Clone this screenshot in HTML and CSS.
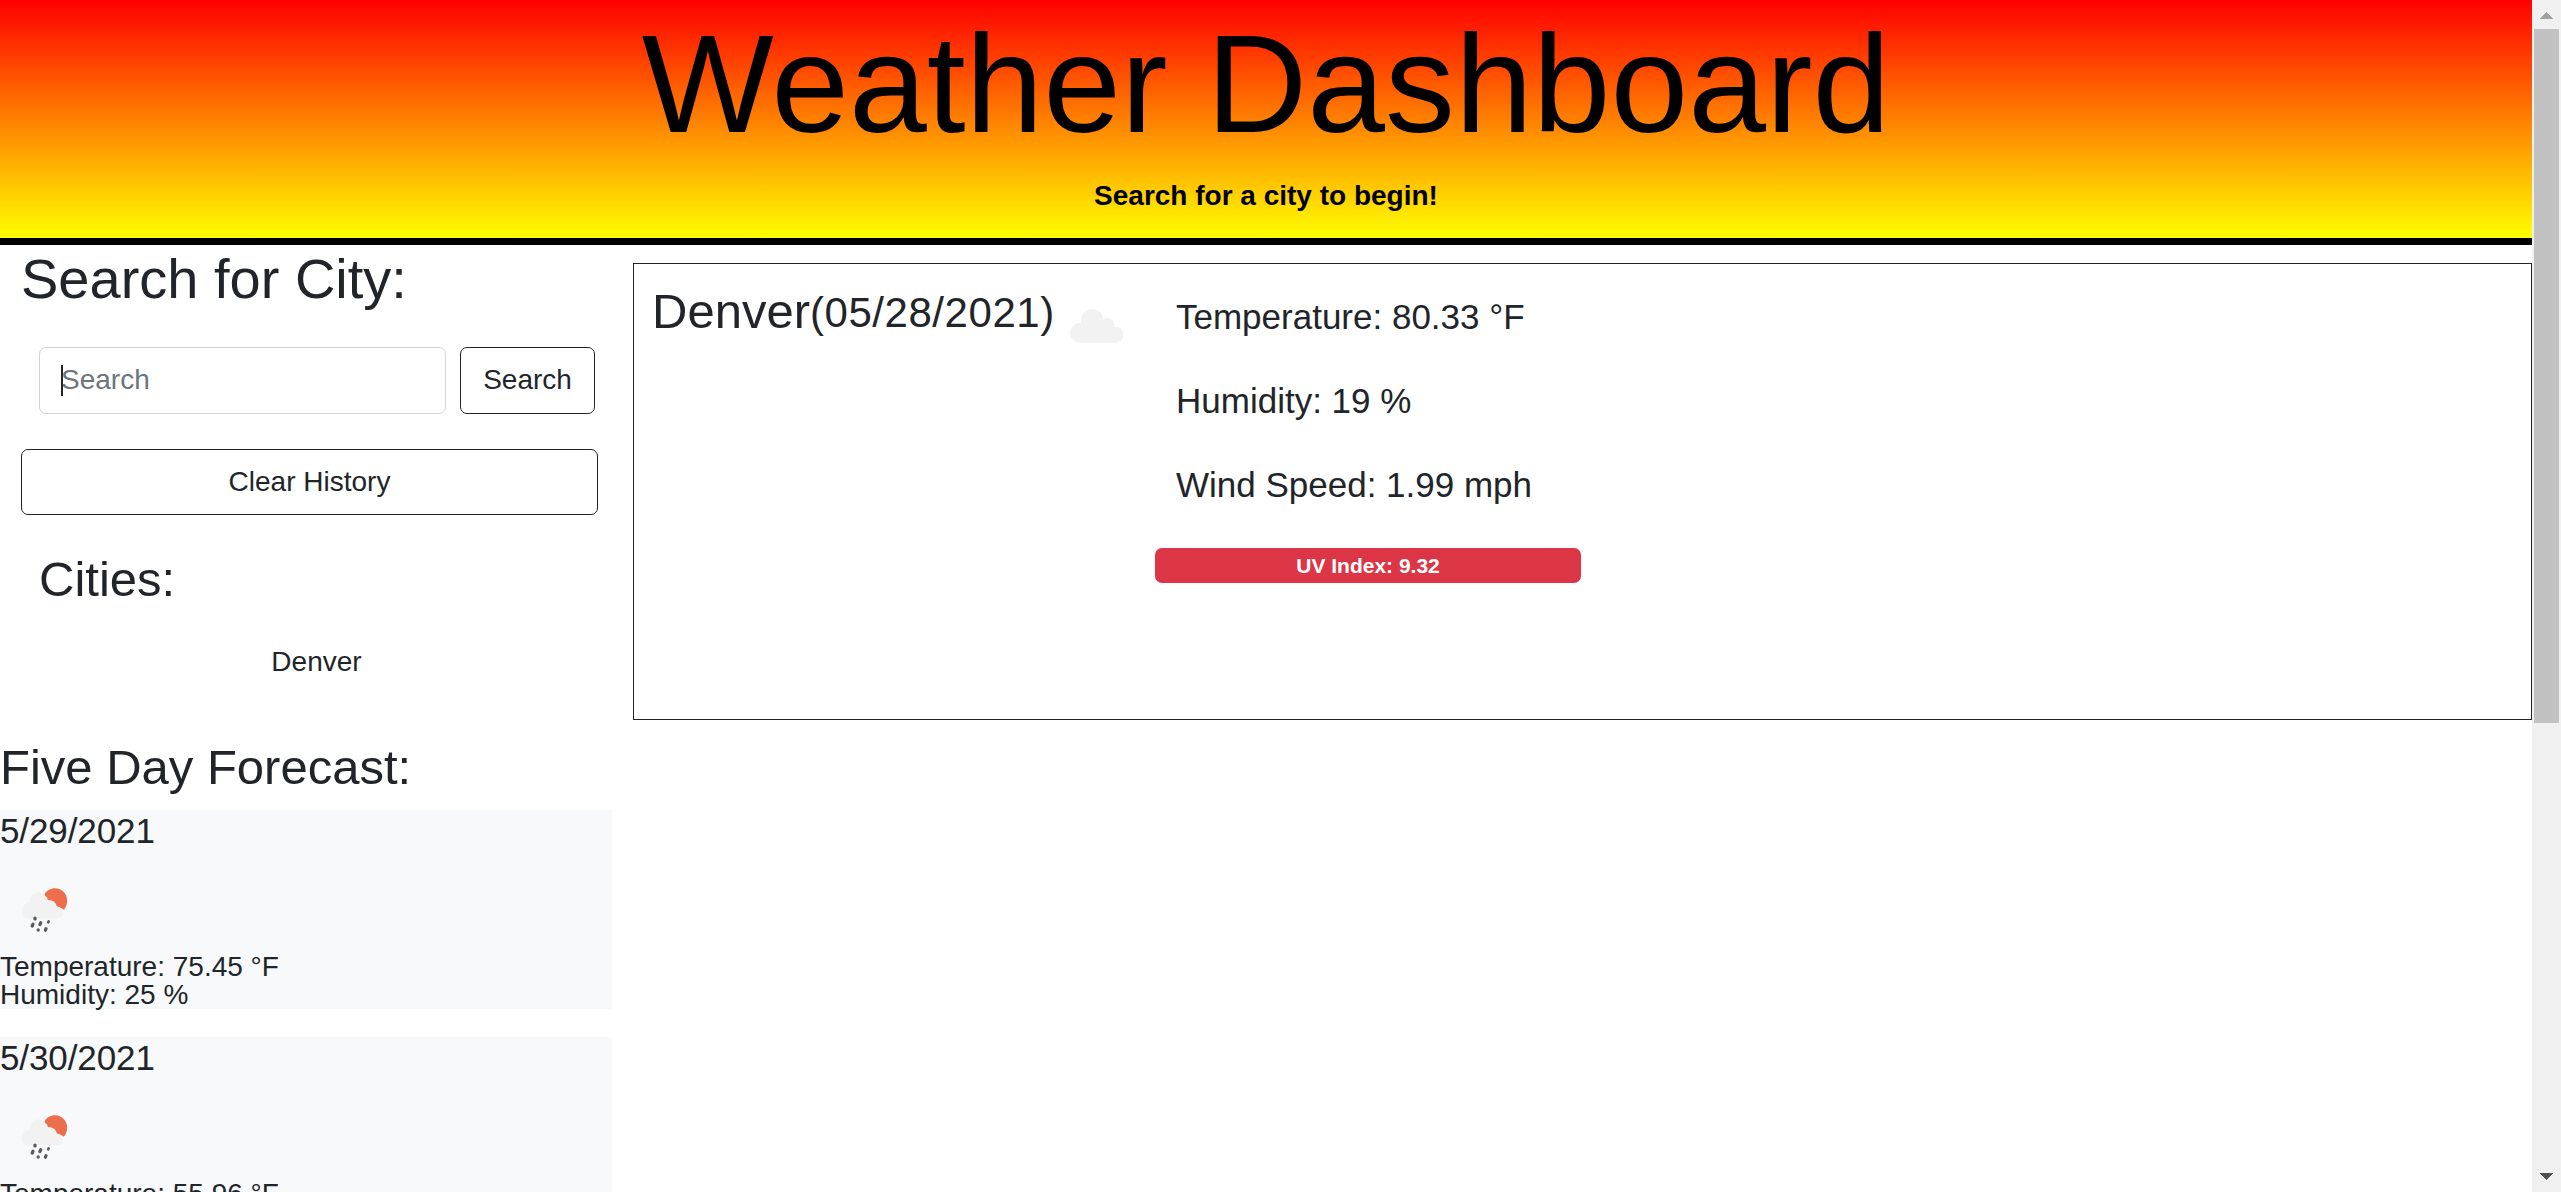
FILE: index.html
```html
<!DOCTYPE html>
<html lang="en">
<head>
<meta charset="utf-8">
<title>Weather Dashboard</title>
<link rel="stylesheet" href="styles.css">
</head>
<body>
<svg width="0" height="0" class="defs">
  <symbol id="rain" viewBox="0 0 88 87">
    <path fill="#ec6e4c" d="M44.500 28.500C46.500 24.500 50.500 22.300 55 22.300C62 22.300 67.200 28 67.200 34.500C67.200 38 66 41.500 63.800 43.800C62.500 42.500 61.500 43 60.500 42.500C59 41.500 57.500 41 56.500 39.500C55.500 36.500 53.500 34 49.500 34.800C47 34.500 48 32.500 47 31.500C46 30.500 44.500 30 44.500 28.500Z"/>
    <g fill="#f2f2f2">
      <circle cx="29.300" cy="44.800" r="7.800"/>
      <circle cx="38.300" cy="35" r="8.800"/>
      <circle cx="49.500" cy="40.500" r="6.300"/>
      <circle cx="57.500" cy="46.500" r="5.800"/>
      <path d="M29 38h20l8 6v8.300H29z"/>
    </g>
    <g stroke="#5a5a5e" stroke-width="3.300" stroke-linecap="round">
      <path d="M35 52.100v.8M33 58.200l-.8 1.800M40.700 56.800l-.8 1.800M38.200 63.800v.2M46 62.800l-.6 1.400"/>
      <path stroke-width="2.700" d="M48.600 55.500l-.4.800"/>
    </g>
  </symbol>
</svg>
<div class="page">
  <header class="hero">
    <h1>Weather Dashboard</h1>
    <p>Search for a city to begin!</p>
  </header>
  <div class="content">
    <aside class="side">
      <h2>Search for City:</h2>
      <form class="search">
        <div class="field"><span class="caret"></span><span>Search</span></div>
        <button type="button" class="btn">Search</button>
      </form>
      <button type="button" class="btn clear">Clear History</button>
      <h3 class="cities">Cities:</h3>
      <div class="city">Denver</div>
      <h3 class="forecast">Five Day Forecast:</h3>
      <section class="card">
        <h5>5/29/2021</h5>
        <svg class="icon"><use href="#rain"/></svg>
        <p>Temperature: 75.45 °F</p>
        <p>Humidity: 25 %</p>
      </section>
      <section class="card">
        <h5>5/30/2021</h5>
        <svg class="icon"><use href="#rain"/></svg>
        <p>Temperature: 55.96 °F</p>
      </section>
    </aside>
    <main class="current">
      <div class="place">
        <span class="name">Denver</span><span class="date">(05/28/2021)</span>
        <svg class="cloud" viewBox="0 0 54 34">
          <g fill="#f2f2f2">
            <circle cx="10" cy="23.700" r="10"/>
            <circle cx="22.300" cy="11.300" r="11.300"/>
            <circle cx="37.500" cy="16" r="7"/>
            <circle cx="45.500" cy="25.700" r="8"/>
            <path d="M10 14h29l6.500 4v15.700H10z"/>
          </g>
        </svg>
      </div>
      <div class="stats">
        <p>Temperature: 80.33 °F</p>
        <p>Humidity: 19 %</p>
        <p>Wind Speed: 1.99 mph</p>
        <div class="uv">UV Index: 9.32</div>
      </div>
    </main>
  </div>
</div>
<div class="scrollbar">
  <svg class="arrow" viewBox="0 0 13 7" shape-rendering="crispEdges"><path fill="#a3a3a3" d="M0 7L6.500 0L13 7Z"/></svg>
  <div class="thumb"></div>
  <svg class="arrow" viewBox="0 0 13 7" shape-rendering="crispEdges"><path fill="#505050" d="M0 0L6.500 7L13 0Z"/></svg>
</div>
</body>
</html>
```
FILE: styles.css
```css
* { box-sizing: border-box; }
body {
  margin: 0;
  height: 1192px;
  display: flex;
  overflow: hidden;
  background: #fff;
  color: #212529;
  font: 28px/42px "Liberation Sans", Arial, sans-serif;
}
h1, h2, h3, h5, p { margin: 0; font-weight: 400; }
.defs { position: absolute; }
.page { width: 2532px; height: 1192px; flex: none; overflow: hidden; }

.hero {
  height: 245px;
  border-bottom: 7px solid #000;
  background: linear-gradient(red, yellow);
  color: #000;
  text-align: center;
}
.hero h1 { font-size: 139.8px; line-height: 168px; }
.hero p { margin-top: 7px; font-weight: 700; }

.content { display: flex; align-items: flex-start; }
.side { width: 633px; flex: none; }
.side h2 { font-size: 56px; line-height: 67px; padding-left: 21px; }
.side h3 { font-size: 49px; line-height: 59px; }

.search { display: flex; gap: 14px; margin: 35px 0 0 39px; }
.field {
  width: 407px;
  height: 67px;
  padding: 11px 21px;
  border: 1px solid #ced4da;
  border-radius: 7px;
  color: #6c757d;
  position: relative;
}
.caret {
  position: absolute;
  left: 21px;
  top: 17px;
  width: 2px;
  height: 31px;
  background: #212529;
}
.btn {
  width: 135px;
  height: 67px;
  padding: 0;
  border: 1px solid #212529;
  border-radius: 7px;
  background: #fff;
  color: #212529;
  font: inherit;
}
.search .btn { padding-bottom: 2px; }
.clear { display: block; width: 577px; height: 66px; margin: 35px 0 35px 21px; }
.side .cities { padding-left: 39px; }
.city { margin: 32px 0 55px; text-align: center; }
.card { width: 612px; height: 199px; margin: 13px 0 28px; background: #f8f9fa; }
.card + .card { margin-top: 0; }
.card h5 { font-size: 35px; line-height: 42px; letter-spacing: -0.1px; }
.card p { line-height: 28px; }
.icon { display: block; width: 88px; height: 87px; margin-top: 14px; }

.current {
  flex: 1;
  height: 457px;
  margin-top: 18px;
  padding: 18px 18px;
  border: 1px solid #212529;
  display: flex;
}
.place { width: 503px; display: flex; align-items: flex-start; white-space: nowrap; }
.name { font-size: 49px; line-height: 59px; }
.date { font-size: 42px; line-height: 62px; letter-spacing: 0.55px; }
.cloud { width: 54px; height: 34px; flex: none; margin: 27px 0 0 15px; }
.stats { width: 426px; }
.stats p { font-size: 35px; line-height: 42px; margin: 14px 0 42px 21px; }
.stats p + p { margin-top: 0; }
.uv {
  height: 35px;
  border-radius: 7px;
  background: #dc3545;
  color: #fff;
  font-size: 21px;
  font-weight: 700;
  line-height: 35px;
  text-align: center;
}

.scrollbar {
  width: 29px;
  flex: none;
  background: #f0f0f0;
  display: flex;
  flex-direction: column;
  align-items: center;
  padding: 12px 0;
}
.arrow { width: 13px; height: 7px; }
.thumb { width: 25px; height: 694px; margin: 10px 0 auto; background: #c1c1c1; }
```
